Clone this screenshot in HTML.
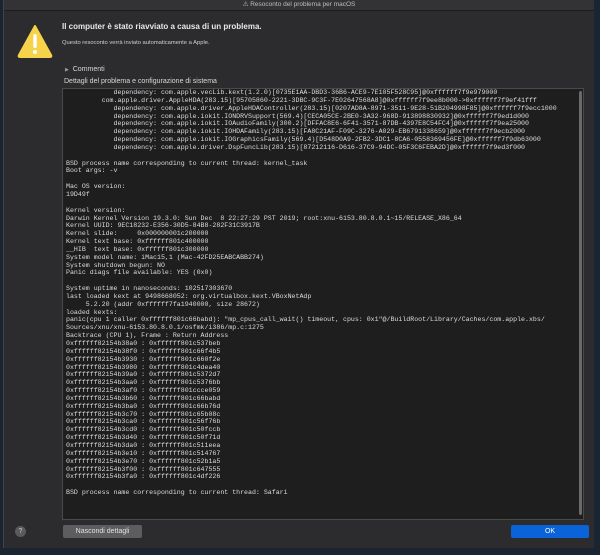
<!DOCTYPE html><html><head><meta charset="utf-8"><style>
body{margin:0;width:600px;height:555px;background:#1b2431;overflow:hidden;position:relative;font-family:"Liberation Sans",sans-serif}
.win{position:absolute;left:3px;top:0;width:590px;height:548px;background:#2c2c2e;border-left:1px solid #444}
.tb{position:absolute;left:0;top:0;width:590px;height:10px;background:#333335;border-bottom:1px solid #1c1c1c;color:#bdbdbd;font-size:6.5px;text-align:center;line-height:9px}
.box{position:absolute;left:58px;top:88px;width:520px;height:430px;background:#1e1e1e;border:1px solid #4a4a4a}
pre{margin:0;position:absolute;left:3px;top:0;font-family:"Liberation Mono",monospace;font-size:6.6px;line-height:7.84px;color:#dcdcdc;white-space:pre}
.sb{position:absolute;right:1px;top:2px;width:3px;height:424px;background:#6a6a6a;border-radius:2px}
.btn{position:absolute;top:525px;height:13px;border-radius:2px;font-size:7px;line-height:13px;text-align:center;color:#e0e0e0}
</style></head><body>
<div class="win">
<div class="tb">&#9888;&#xFE0E; Resoconto del problema per macOS</div>
<svg style="position:absolute;left:13px;top:24px" width="36" height="34" viewBox="0 0 36 34"><path d="M18 2 L34 31 Q35 33 33 33 L3 33 Q1 33 2 31 Z" fill="#f6d34a" stroke="#f6d34a" stroke-linejoin="round" stroke-width="2"/><rect x="16.3" y="10" width="3.4" height="14" rx="1.7" fill="#fff"/><circle cx="18" cy="28" r="2" fill="#fff"/></svg>
<div style="position:absolute;left:58px;top:22px;font-size:8px;font-weight:bold;color:#e8e8e8">Il computer è stato riavviato a causa di un problema.</div>
<div style="position:absolute;left:58px;top:40px;font-size:5.8px;color:#d0d0d0">Questo resoconto verrà inviato automaticamente a Apple.</div>
<div style="position:absolute;left:61px;top:66px;font-size:7px;color:#d8d8d8"><span style="color:#999;font-size:5px">&#9654;</span>&nbsp; Commenti</div>
<div style="position:absolute;left:60px;top:78px;font-size:7px;color:#d8d8d8">Dettagli del problema e configurazione di sistema</div>
<div class="box"><pre style="top:0px">            dependency: com.apple.vecLib.kext(1.2.0)[0735E1AA-DBD3-36B6-ACE9-7E105F528C95]@0xffffff7f9e979000
         com.apple.driver.AppleHDA(283.15)[95705860-2221-3DBC-9C3F-7E02647568A8]@0xffffff7f9ee8b000->0xffffff7f9ef41fff
            dependency: com.apple.driver.AppleHDAController(283.15)[0207AD8A-8971-3511-9E28-51B204998F85]@0xffffff7f9ecc1000
            dependency: com.apple.iokit.IONDRVSupport(569.4)[CECA05CE-2BE0-3A32-968D-913898830932]@0xffffff7f9ed1d000
            dependency: com.apple.iokit.IOAudioFamily(300.2)[DFFAC8E6-6F41-3571-87DB-4397E8C54FC4]@0xffffff7f9ea25000
            dependency: com.apple.iokit.IOHDAFamily(283.15)[FA8C21AF-F09C-3276-A029-EB6791338659]@0xffffff7f9ecb2000
            dependency: com.apple.iokit.IOGraphicsFamily(569.4)[D548D0A9-2FB2-3DC1-8CA6-0558369456FE]@0xffffff7f9db63000
            dependency: com.apple.driver.DspFuncLib(283.15)[87212116-D616-37C9-94DC-05F3C6FEBA2D]@0xffffff7f9ed3f000

BSD process name corresponding to current thread: kernel_task
Boot args: -v

Mac OS version:
19D49f

Kernel version:
Darwin Kernel Version 19.3.0: Sun Dec  8 22:27:29 PST 2019; root:xnu-6153.80.8.0.1~15/RELEASE_X86_64
Kernel UUID: 9EC18232-E356-30D5-84B8-282F31C3917B
Kernel slide:     0x000000001c200000
Kernel text base: 0xffffff801c400000
__HIB  text base: 0xffffff801c300000
System model name: iMac15,1 (Mac-42FD25EABCABB274)
System shutdown begun: NO
Panic diags file available: YES (0x0)

System uptime in nanoseconds: 102517303670
last loaded kext at 9498668052: org.virtualbox.kext.VBoxNetAdp
     5.2.20 (addr 0xffffff7fa1940000, size 28672)
loaded kexts:
panic(cpu 1 caller 0xffffff801c66babd): "mp_cpus_call_wait() timeout, cpus: 0x1"@/BuildRoot/Library/Caches/com.apple.xbs/
Sources/xnu/xnu-6153.80.8.0.1/osfmk/i386/mp.c:1275
Backtrace (CPU 1), Frame : Return Address
0xffffff82154b38a0 : 0xffffff801c537beb
0xffffff82154b38f0 : 0xffffff801c66f4b5
0xffffff82154b3930 : 0xffffff801c660f2e
0xffffff82154b3980 : 0xffffff801c4dea40
0xffffff82154b39a0 : 0xffffff801c5372d7
0xffffff82154b3aa0 : 0xffffff801c5376bb
0xffffff82154b3af0 : 0xffffff801ccce059
0xffffff82154b3b60 : 0xffffff801c66babd
0xffffff82154b3ba0 : 0xffffff801c66b76d
0xffffff82154b3c70 : 0xffffff801c65b08c
0xffffff82154b3ca0 : 0xffffff801c56f76b
0xffffff82154b3cd0 : 0xffffff801c50fccb
0xffffff82154b3d40 : 0xffffff801c50f71d
0xffffff82154b3da0 : 0xffffff801c511eea
0xffffff82154b3e10 : 0xffffff801c514767
0xffffff82154b3e70 : 0xffffff801c52b1a5
0xffffff82154b3f00 : 0xffffff801c647555
0xffffff82154b3fa0 : 0xffffff801c4df226

BSD process name corresponding to current thread: Safari</pre><div class="sb"></div></div>
<div style="position:absolute;left:11px;top:526px;width:11px;height:11px;border-radius:50%;background:#5a5a5c;color:#ccc;font-size:7px;text-align:center;line-height:11px">?</div>
<div class="btn" style="left:59px;width:79px;background:#5d5d5f">Nascondi dettagli</div>
<div class="btn" style="left:507px;width:78px;background:#0a63d8;color:#fff">OK</div>
</div>
</body></html>
